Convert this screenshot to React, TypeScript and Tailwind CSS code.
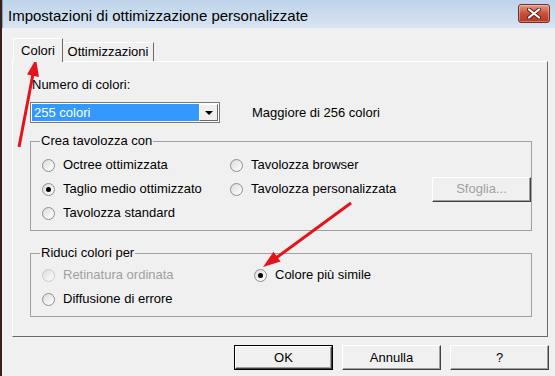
const font = "font-['Liberation_Sans',Arial,sans-serif]";

function Radio({ checked = false, disabled = false }: { checked?: boolean; disabled?: boolean }) {
  return (
    <span
      className={`flex h-[13px] w-[13px] shrink-0 items-center justify-center rounded-full border bg-gradient-to-br from-[#dcdcdc] to-white ${
        disabled ? 'border-[#c8c8c8]' : 'border-[#8f8f8f]'
      }`}
    >
      {checked && <span className="h-[5px] w-[5px] rounded-full bg-black" />}
    </span>
  );
}

function Option({
  label,
  checked,
  disabled,
  className = '',
}: {
  label: string;
  checked?: boolean;
  disabled?: boolean;
  className?: string;
}) {
  return (
    <div className={`flex h-[24px] items-center gap-[8px] ${className}`}>
      <Radio checked={checked} disabled={disabled} />
      <span className={`text-[13px] ${disabled ? 'text-[#a0a0a0]' : 'text-black'}`}>{label}</span>
    </div>
  );
}

function WinButton({ label, primary, disabled }: { label: string; primary?: boolean; disabled?: boolean }) {
  return (
    <div
      className={`flex h-[25px] w-[99px] items-center justify-center bg-[#f0f0f0] text-[13px] ${
        primary ? 'border border-black' : ''
      } ${disabled ? 'text-[#a0a0a0]' : 'text-black'}`}
    >
      <div className="flex h-full w-full items-center justify-center border-t border-l border-t-white border-l-white border-r border-b border-r-[#404040] border-b-[#404040] shadow-[inset_-1px_-1px_0_#a0a0a0]">
        {label}
      </div>
    </div>
  );
}

export default function App() {
  return (
    <div className={`relative h-[376px] w-[555px] overflow-hidden border-l-[2px] border-[#35201a] bg-[#f0f0f0] ${font}`}>
      {/* title bar */}
      <div className="flex h-[28px] items-start justify-between border-l border-[#8aa0bb] bg-gradient-to-b from-[#bfd3ea] to-[#d8e4f2] pl-[5px] pr-[5px]">
        <span className="mt-[7px] text-[15px] leading-[18px] text-black">Impostazioni di ottimizzazione personalizzate</span>
        <div className="mt-[4px] flex h-[19px] w-[32px] items-center justify-center rounded-[3px] border border-[#7a2b1f] bg-gradient-to-b from-[#e2988a] via-[#c9503b] to-[#b7361f] shadow-[inset_0_0_0_1px_rgba(255,255,255,0.35)]">
          <svg width="14" height="11" viewBox="0 0 14 11">
            <path d="M2 1.5 L12 9.5 M12 1.5 L2 9.5" stroke="#5a1d14" strokeWidth="4" strokeLinecap="round" />
            <path d="M2 1.5 L12 9.5 M12 1.5 L2 9.5" stroke="#ffffff" strokeWidth="2.2" strokeLinecap="round" />
          </svg>
        </div>
      </div>

      {/* tabs */}
      <div className="ml-[11px] mt-[10px] flex items-end">
        <div className="relative z-10 -mb-[1px] flex h-[24px] w-[50px] items-start justify-center border-t border-l border-t-white border-l-white border-r border-r-[#696969] bg-[#f0f0f0] pt-[4px] text-[13px] leading-[15px]">
          Colori
        </div>
        <div className="flex h-[19px] w-[91px] items-center justify-center border-t border-t-white border-r border-r-[#696969] text-[13px]">
          Ottimizzazioni
        </div>
      </div>

      {/* tab panel */}
      <div className="ml-[10px] h-[276px] w-[536px] border-t border-l border-t-white border-l-white border-r border-b border-r-[#696969] border-b-[#696969]">
        <div className="ml-[19px] mt-[15px] h-[16px] text-[13px] leading-[16px]">Numero di colori:</div>

        <div className="ml-[17px] mt-[9px] flex items-center">
          <div className="flex h-[21px] w-[190px] items-center border border-[#7a7a7a] bg-white p-[1px]">
            <div className="flex h-full flex-1 items-center bg-[#3399ff] pl-[2px] text-[13px] text-white">255 colori</div>
            <div className="flex h-full w-[19px] items-center justify-center border-t border-l border-t-white border-l-white border-r border-b border-r-[#696969] border-b-[#696969] bg-[#f0f0f0]">
              <svg width="8" height="4" viewBox="0 0 8 4">
                <path d="M0 0 H8 L4 4 Z" fill="black" />
              </svg>
            </div>
          </div>
          <span className="ml-[32px] text-[13px]">Maggiore di 256 colori</span>
        </div>

        <fieldset className="ml-[17px] mt-[10px] h-[98px] w-[502px] border border-[#a0a0a0] pb-[4px]">
          <legend className="ml-[9px] px-[1px] text-[13px] leading-[16px]">Crea tavolozza con</legend>
          <div className="pl-[11px] pt-[4px]">
            <div className="flex">
              <Option label="Octree ottimizzata" className="w-[188px]" />
              <Option label="Tavolozza browser" />
            </div>
            <div className="flex h-[24px] items-center">
              <Option label="Taglio medio ottimizzato" checked className="w-[188px]" />
              <Option label="Tavolozza personalizzata" />
              <div className="ml-auto mr-[0px]">
                <WinButton label="Sfoglia..." disabled />
              </div>
            </div>
            <Option label="Tavolozza standard" />
          </div>
        </fieldset>

        <fieldset className="ml-[17px] mt-[14px] h-[72px] w-[502px] border border-[#a0a0a0]">
          <legend className="ml-[9px] px-[1px] text-[13px] leading-[16px]">Riduci colori per</legend>
          <div className="pl-[11px] pt-[2px]">
            <div className="flex">
              <Option label="Retinatura ordinata" disabled className="w-[212px]" />
              <Option label="Colore più simile" checked />
            </div>
            <Option label="Diffusione di errore" />
          </div>
        </fieldset>
      </div>

      {/* dialog buttons */}
      <div className="mt-[8px] flex justify-end gap-[9px] pr-[6px]">
        <WinButton label="OK" primary />
        <WinButton label="Annulla" />
        <WinButton label="?" />
      </div>

      {/* red annotation arrows */}
      <svg className="pointer-events-none absolute left-0 top-0" width="555" height="376" viewBox="0 0 555 376">
        <line x1="17" y1="147" x2="31" y2="74" stroke="#e3141b" strokeWidth="3" />
        <path d="M34 59 L37 77 L25 74.5 Z" fill="#e3141b" />
        <line x1="349" y1="203" x2="274" y2="258" stroke="#e3141b" strokeWidth="3" />
        <path d="M261 267 L278.5 261.5 L271.5 251.7 Z" fill="#e3141b" />
      </svg>
    </div>
  );
}
